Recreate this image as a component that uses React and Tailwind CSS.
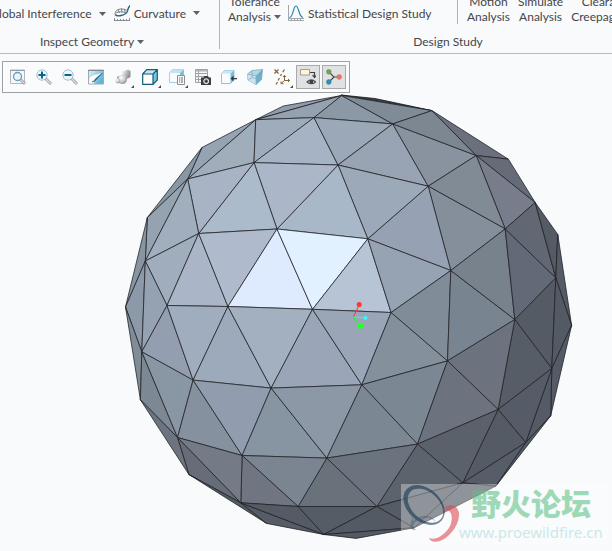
import React from 'react';

const V = {
  A: [341.7, 95.5], B: [283.3, 106], C: [255.7, 119.7], D: [314, 117.6], E: [202, 147.5],
  F: [187.7, 179], G: [254, 162.6], H: [338, 165], I: [147.3, 217.6], J: [145.3, 261],
  K: [198.7, 233.5], L: [277, 229], M: [125.5, 307], N: [167, 305.5], O: [227.9, 306.5],
  P: [312.5, 309.3], Q: [432, 110.6], R: [392.7, 123.9], S: [476.2, 155.5], T: [508.4, 159.2],
  U: [428.2, 186.2], W: [505.2, 228.9], X: [557.8, 234.5], Y: [367.8, 238.8], Z: [450.8, 270.5],
  V: [535.2, 202.5],
  a: [555.8, 277.8], b: [391.1, 312.5], c: [141.8, 351.8], d: [193.1, 380.1], e: [271.1, 388.1],
  f: [140.4, 399.8], g: [177.5, 437.5], h: [242.1, 455.5], i: [188.9, 474.5], j: [240.8, 502.8],
  k: [298.1, 506.5], l: [326.8, 458.1], m: [266.5, 523.4], n: [323.8, 534.5], o: [361.8, 384.8],
  p: [447.5, 360.9], q: [514.8, 319.5], r: [571.6, 325.4], s: [551.8, 368.5], t: [550.7, 415.8],
  u: [498.1, 409.5], v: [525.8, 442.5], w: [417.5, 444.1], x: [462.8, 482.8], y: [495.8, 486.1],
  z: [376.8, 506.5], 1: [414.1, 527.8], 2: [356.1, 538.4],
};

const FACES = `ABC8e9cac ACD93a1b1 ADR8b98a6 AQR7f8b96 CEF96a3b3 CFGa0aebc CDG9facbb DGHa6b3c5
DHR9ba8b7 RHU98a4b4 RUS8993a0 RQS7c8791 QST6b717c STV656c78 SVW777d8a SUW818b96 UWZ858f9c
YUZ96a2b3 HUY9ca9b9 HLYa8b8c8 GHLabb7c9 GKLabbbcb FGKa8b4c6 EFI8997a4 FIJ95a3b1 FJKa0aebd
IJM8794a2 JKN9fadbd KNOaab6c8 KLOafbbcd LOPdeebff LPYe2f1ff PYbb6c4d5 YZb96a3b2 JMc8c99a8
JNc95a2b2 Ncd939eb0 NOd9fadbe Ode9daabb OPea3b0c0 Peo9aa5b7 Pbo9aa5b7 Mcf7f8d99 cfg7c8893
cgd8996a3 dgh85919e deh919daf ehl8794a1 elo8c98a5 bop84919d opw7b8792 olw7b8792 bZp808c97
Zpq78848f ZWq77828d Wqa636a77 WVa616874 VXa555b65 Xar555b65 qas555b65 ars535a63 qsu565d67
pqu6c737e puw6d727f rst545b66 stv545b66 suv555c67 uvx545b65 uwx5a616b vxy565d68 tvy545b65
wxz5b636c xz1555c66 xy1555b66 wzl6b737e lzk69717b hkl7a8591 hjk6f7681 ghj757a87 gij666d79
fgi6b7480 ijm535a64 jmn555c66 jkn545b65 kzn545c66 zn1535a64 n21535a64`
  .split(/\s+/)
  .map((f) => ({
    points: [...f.slice(0, 3)].map((c) => V[c].join(',')).join(' '),
    fill: '#' + f.slice(3),
  }));

function Sphere() {
  return (
    <svg className="block w-[612px] shrink-0" viewBox="0 93 612 458" role="img" aria-label="Geodesic sphere model">
      <path d="M341 95L375 98.500L432 110.600Z" fill="#3c4149" stroke="#17191d" strokeWidth=".8" />
      <g stroke="#1d1e22" strokeWidth=".75" strokeLinejoin="round">
        {FACES.map((f) => (
          <polygon key={f.points} points={f.points} fill={f.fill} />
        ))}
      </g>
      <path d="M353.500 317L359.200 304.500" stroke="#ff3434" strokeWidth="1" />
      <circle cx="359.200" cy="304.400" r="2.500" fill="#ff3434" />
      <path d="M353.500 317L365.500 318" stroke="#33f0ff" strokeWidth="1.200" />
      <circle cx="365.500" cy="318" r="2.100" fill="#33f8ff" />
      <path d="M353.500 317L360.500 326" stroke="#2bf52b" strokeWidth="1.200" strokeDasharray="3 1" />
      <circle cx="360.500" cy="326" r="3" fill="#2bff2b" />
    </svg>
  );
}

function Caret() {
  return (
    <svg className="h-1 w-[7px] shrink-0" viewBox="0 0 7 4" aria-hidden="true">
      <path d="M0 0H7L3.500 4Z" fill="#5e6064" />
    </svg>
  );
}

const Icon = ({ children }) => (
  <svg className="size-4 shrink-0" viewBox="0 0 16 16" fill="none" aria-hidden="true">
    {children}
  </svg>
);

const Lens = ({ sign }) => (
  <>
    <path d="M9.500 9.500L15 15" stroke="#9a9da1" strokeWidth="2.800" />
    <path d="M10 10L14.800 14.800" stroke="#e2e4e6" strokeWidth="1.200" />
    <circle cx="6" cy="6" r="5.200" fill="#edf6fa" stroke="#9fc1d0" />
    <path d={sign} stroke="#0a6388" strokeWidth="2" />
  </>
);

const TOOLS = [
  { name: 'Refit', art: (
    <>
      <path d="M.5 1H14.500V14.500H.5Z" fill="#f5f7f8" stroke="#b4b8bb" />
      <path d="M0 1.500H15" stroke="#979b9f" />
      <path d="M10 10L15 15" stroke="#95999d" strokeWidth="2.800" />
      <path d="M10.500 10.500L14.800 14.800" stroke="#dfe1e3" strokeWidth="1.200" />
      <circle cx="7.500" cy="7.500" r="4" fill="#eaf6fb" stroke="#5ea2c0" strokeWidth="1.300" />
    </>
  ) },
  { name: 'Zoom In', art: <Lens sign="M2.500 6H9.500M6 2.500V9.500" /> },
  { name: 'Zoom Out', art: <Lens sign="M2.500 6H9.500" /> },
  { name: 'Repaint', art: (
    <>
      <defs>
        <linearGradient id="paint" x1="0" y1="0" x2="1" y2=".6">
          <stop offset="0" stopColor="#e4f4fa" />
          <stop offset="1" stopColor="#5cb3d5" />
        </linearGradient>
      </defs>
      <path d="M.5 1H15.500V15H.5Z" fill="url(#paint)" stroke="#a4a9ad" />
      <path d="M1 14.500V10Q3 6 9 5.500L13 4L8 10L6 14.500Z" fill="#fbfcfd" />
      <path d="M14.500 4L8.500 10.500Q7 13 4 13Q6.500 12 7.500 9.800Z" fill="#2a5f78" stroke="#2a5f78" strokeWidth=".5" />
      <path d="M0 1.500H16" stroke="#83898d" />
    </>
  ) },
  { name: 'Display Style', flyout: true, art: (
    <>
      <defs>
        <radialGradient id="ball" cx=".35" cy=".3" r=".8">
          <stop offset="0" stopColor="#fff" />
          <stop offset=".5" stopColor="#cfcfcf" />
          <stop offset="1" stopColor="#858585" />
        </radialGradient>
        <linearGradient id="block" x1="0" y1="0" x2="1" y2=".4">
          <stop offset="0" stopColor="#fff" />
          <stop offset="1" stopColor="#8d8d8d" />
        </linearGradient>
      </defs>
      <path d="M7 2.500L13 .5L15.500 2V8L12 10H7Z" fill="url(#block)" />
      <path d="M2 7.500L7 6.500L8 10L2 10Z" fill="#666" opacity=".6" />
      <circle cx="7.500" cy="10.500" r="4.500" fill="url(#ball)" />
      <circle cx="2.800" cy="12" r="2.400" fill="url(#ball)" />
    </>
  ) },
  { name: 'Standard Orientation', flyout: true, art: (
    <>
      <path d="M.7 5L4.700 .7H15.300V11L11 15.300H.7Z" fill="#fff" />
      <path d="M.7 5L4.700 .7H15.300L11 5Z" fill="#c5e4ef" />
      <path d="M11 5L15.300 .7V11L11 15.300Z" fill="#7cc3dc" />
      <path d="M.7 5L4.700 .7H15.300V11L11 15.300H.7ZM.7 5H11V15.300M11 5L15.300 .7" stroke="#125c7c" strokeWidth="1.200" />
    </>
  ) },
  { name: 'Saved Orientations', flyout: true, art: (
    <>
      <path d="M.5 4L3.500 .5H14.500V9L10.500 13.500H.5Z" fill="#f7fbfd" stroke="#9fd0e3" />
      <path d="M.5 4L3.500 .5H14.500L11 4Z" fill="#c3e3ef" />
      <path d="M11 4L14.500 .5V9H11Z" fill="#77bfd9" />
      <path d="M8.500 6.500H15.500V15.500H8.500Z" fill="#fafafa" stroke="#8f8f8f" />
      <path d="M10 9H14M10 11H14M10 13H14" stroke="#666" strokeDasharray="1 .8 3" />
    </>
  ) },
  { name: 'View Manager', art: (
    <>
      <path d="M.5 .5H12.500V13.500H.5Z" fill="#f6f6f6" stroke="#a3a3a3" />
      <path d="M1 1H12V2.500H1Z" fill="#b5b5b5" />
      <path d="M0 4.500H13M0 7.500H13M0 10.500H13M3.500 1V13" stroke="#a3a3a3" />
      <path d="M6 8.500H8.500L9.500 7H13L14 8.500H16V16H6Z" fill="#3a3e42" />
      <circle cx="11.200" cy="12.200" r="2.500" fill="#767c82" stroke="#fff" strokeWidth=".9" />
      <circle cx="11.200" cy="12.200" r="1" fill="#25282b" />
    </>
  ) },
  { name: 'View Normal', art: (
    <>
      <path d="M.5 4.500L3.500 1.500H13V10.500L9.500 14.500H.5Z" fill="#f8fcfe" stroke="#8cc4db" />
      <path d="M.5 4.500L3.500 1.500H13L9.500 4.500Z" fill="#c5e5f0" />
      <path d="M9.500 4.500L13 1.500V10.500L9.500 14.500Z" fill="#76bfda" />
      <path d="M9.500 9.500L12.500 6.500V9H16V10.200H12.500V12.500Z" fill="#333a40" />
    </>
  ) },
  { name: 'Perspective View', art: (
    <>
      <path d="M.5 5L5 1.500L15.500 .5L14.500 10.500L9 15.500L1 11Z" fill="#b3d8e6" stroke="#8fb8ca" />
      <path d="M9 7L15.500 .5L14.500 10.500L9 15.500Z" fill="#6eafca" />
      <path d="M.5 5L9 7V15.500L1 11Z" fill="#cbe4ee" />
      <path d="M.5 5L9 7L15.500 .5M9 7V15.500M5 1.500V8.500L1 11M5 8.500L14 11" stroke="#82b0c4" strokeWidth=".8" />
    </>
  ) },
  { name: 'Datum Display Filters', flyout: true, art: (
    <g stroke="#85652f" strokeWidth="1.200">
      <path d="M.5 .5L4.500 4.500M4.500 .5L.5 4.500" />
      <path d="M10.500 .5L8.700 3.200M7.500 5L6.500 7M5.500 9L4 11.500M3.500 13L2 15.500" />
      <path d="M10.500 6.500V11.500H15.500M10.500 11.500L7 14.500M9 8L10.500 6.300L12 8M14 10L15.700 11.500L14 13M7 12.500V14.700H9.500" strokeWidth="1" />
    </g>
  ) },
  { name: 'Annotation Display', pressed: true, art: (
    <>
      <path d="M.5 .5H9.500V6H.5Z" fill="#fff3d8" stroke="#a39e8d" />
      <path d="M10 3.500H14.500V8M12.500 6L14.500 8.500L16 6.500" stroke="#3e4246" strokeWidth="1.200" />
      <path d="M7 13Q11.300 9 15.600 13Q11.300 16.500 7 13Z" fill="#fff" stroke="#4b5055" strokeWidth="1.200" />
      <circle cx="11.300" cy="12.900" r="1.900" fill="#383d42" />
    </>
  ) },
  { name: 'Spin Center', pressed: true, art: (
    <>
      <path d="M3 3L8 8L3 13M8 8H13" stroke="#45494d" strokeWidth="1.200" />
      <circle cx="2.800" cy="2.800" r="2.400" fill="#6fa55b" stroke="#568a44" strokeWidth=".5" />
      <circle cx="2.800" cy="13" r="2.400" fill="#2f8fb4" stroke="#267a9b" strokeWidth=".5" />
      <circle cx="13.200" cy="8" r="2.400" fill="#e87870" stroke="#cf625b" strokeWidth=".5" />
    </>
  ) },
];

function ToolButton({ tool }) {
  const base = 'relative flex h-6 shrink-0 items-center justify-center border ';
  const width = tool.flyout ? 'w-[25px] ' : 'w-6 ';
  const state = tool.pressed ? 'border-[#a8a9ab] bg-[#e0e1e3]' : 'border-transparent';
  return (
    <button type="button" aria-label={tool.name} aria-pressed={tool.pressed} className={base + width + state}>
      <Icon>{tool.art}</Icon>
      {tool.flyout && (
        <svg className="absolute right-0 bottom-0 size-[3px]" viewBox="0 0 4 4" aria-hidden="true">
          <path d="M4 0V4H0Z" fill="#4b4d50" />
        </svg>
      )}
    </button>
  );
}

function LargeButton({ top, bottom, caret }) {
  return (
    <button type="button" className="shrink-0 text-center whitespace-nowrap">
      <span className="block">{top}</span>
      <span className="flex items-center justify-center gap-[3px]">
        {bottom}
        {caret && <Caret />}
      </span>
    </button>
  );
}

function SmallButton({ icon, label, caret }) {
  return (
    <button type="button" className="mb-[3px] flex shrink-0 items-center gap-1 whitespace-nowrap">
      {icon}
      <span>{label}</span>
      {caret && <span className="ml-[3px] flex"><Caret /></span>}
    </button>
  );
}

const CurvatureIcon = (
  <Icon>
    <path d="M0 15.500H16M.5 13V15.500M3.500 14V15.500M6.500 14V15.500M9.500 14V15.500M12.500 14V15.500M15.500 13V15.500" stroke="#7d8184" strokeWidth=".9" />
    <path d="M1 9.500Q3 11.500 7 10.500Q13 9 13.500 6Q14 3 16 .5" stroke="#2a617b" strokeWidth="1.400" />
    <path d="M1 9Q1 5 6 4Q10 3.500 13.500 5.500M2 8Q6 5.500 12.500 8M4 4.500L5.500 8M7.500 3.500L8 7.500M10.500 4L11 7.500" stroke="#70797e" strokeWidth=".9" />
  </Icon>
);

const StatisticsIcon = (
  <Icon>
    <path d="M.5 0V15.500H16M.5 13.500H16M3.500 13.500V15.500M6.500 13.500V15.500M9.500 13.500V15.500M12.500 13.500V15.500" stroke="#999da1" strokeWidth=".9" />
    <path d="M1.500 12.500C5.500 12 5 1 8 1S10.500 12 15 12.500" stroke="#3187ac" strokeWidth="1.200" />
  </Icon>
);

function Ribbon() {
  return (
    <header className="flex overflow-hidden border-b border-[#adbfbf] pb-1 text-xs/[15px] text-[#454649]">
      <section className="-ml-[35px] w-[254px] shrink-0">
        <div className="flex h-6 items-end justify-end gap-2 pr-[19px]">
          <SmallButton label="Global Interference" caret />
          <SmallButton icon={CurvatureIcon} label="Curvature" caret />
        </div>
        <button type="button" className="mx-auto mt-2.5 flex items-center gap-[3px]">
          Inspect Geometry <Caret />
        </button>
      </section>
      <section className="w-[457px] shrink-0 border-l border-[#b1b4b8]">
        <div className="flex h-6 items-end pl-2">
          <LargeButton top="Tolerance" bottom="Analysis" caret />
          <div className="ml-[7px] flex">
            <SmallButton icon={StatisticsIcon} label="Statistical Design Study" />
          </div>
          <div className="ml-auto flex w-[219px] shrink-0 gap-2 border-l border-[#b1b4b8] pl-[9px]">
            <LargeButton top="Motion" bottom="Analysis" />
            <LargeButton top="Simulate" bottom="Analysis" />
            <LargeButton top="Clearance and" bottom="Creepage Analysis" />
          </div>
        </div>
        <h2 className="mt-2.5 text-center">Design Study</h2>
      </section>
    </header>
  );
}

function Watermark() {
  return (
    <div className="absolute right-1 bottom-1.5 flex h-[61px] w-[207px] gap-3 bg-[#fbfdfb]/35">
      <svg className="ml-0.5 h-[61px] w-14 shrink-0" viewBox="403 484 56 61" fill="none" aria-hidden="true">
        <g transform="rotate(42 424 505)">
          <path fillRule="evenodd" d="M400.500 505a23.500 16.500 0 1 0 47 0a23.500 16.500 0 1 0 -47 0ZM405 504.500a20.500 13.500 0 1 1 41 0a20.500 13.500 0 1 1 -41 0Z" fill="#12304e" opacity=".58" />
        </g>
        <path d="M413 517C408 526 411 531 416 530C411 527 413 522 421 519C428 516 434 519 436 523C434 515 420 513 413 521" fill="#37566d" opacity=".4" />
        <path d="M442.500 510C447 503 457 503 459 513C460 525 449 538 440 541C434 543 430 541 429 538C436 541 446 534 450 526C454 516 451 508 442.500 510Z" fill="#dc4b55" opacity=".6" />
      </svg>
      <div>
        <p className="text-[30px]/[36px] font-black whitespace-nowrap text-[#5fc287]/60 font-['Noto_Sans_CJK_SC',sans-serif]">野火论坛</p>
        <p className="-ml-3 text-[15px]/[24px] whitespace-nowrap text-[#9bd2d4]/50 font-['Noto_Sans',sans-serif]">www.proewildfire.cn</p>
      </div>
    </div>
  );
}

export default function App() {
  return (
    <div className="relative flex min-h-screen flex-col overflow-hidden bg-slate-50 font-['Lato',sans-serif]">
      <Ribbon />
      <div role="toolbar" aria-label="Graphics" className="mx-0.5 mt-[7px] flex h-8 items-center gap-0.5 self-start border border-[#9fa1a3] bg-[#f9fbfc] px-[3px]">
        {TOOLS.map((tool) => (
          <ToolButton key={tool.name} tool={tool} />
        ))}
      </div>
      <main className="relative flex overflow-hidden">
        <Sphere />
        <Watermark />
      </main>
    </div>
  );
}
